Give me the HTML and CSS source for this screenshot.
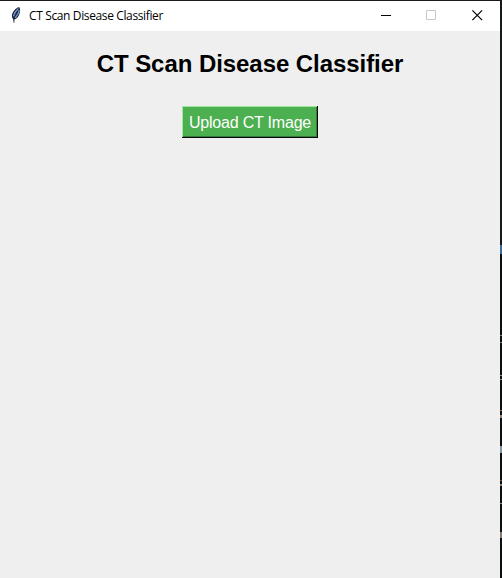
FILE: index.html
```html
<!DOCTYPE html>
<html lang="en">
<head>
<meta charset="utf-8">
<title>CT Scan Disease Classifier</title>
<link rel="stylesheet" href="styles.css">
</head>
<body>
<div class="desktop">
  <div class="window">
    <header class="titlebar">
      <svg class="feather" width="12" height="18" viewBox="0 0 12 18">
        <path d="M9.1 1C10.6 2.5 10.4 6 9 9C7.9 11.5 6 13.2 4.4 13.6L4.4 16.8L3.6 16.8L3.2 13.2C1.5 11 1.5 8.8 2.8 6.4C4.3 3.8 6.6 1.6 9.1 1Z" fill="#18253f"/>
        <path d="M8.4 2.6C6.2 4.4 4.2 7 3.4 10.4M9.2 4.2C8.8 7 7.1 9.8 5.2 11.8" fill="none" stroke="#7699c8" stroke-width="1.3"/>
      </svg>
      <span class="caption">CT Scan Disease Classifier</span>
      <div class="controls">
        <svg width="46" height="30" viewBox="0 0 46 30"><path d="M18 14.5h10" stroke="#000"/></svg>
        <svg width="45" height="30" viewBox="0 0 45 30"><path d="M17.5 9.5h9v9h-9z" fill="none" stroke="#c8c8c8"/></svg>
        <svg width="46" height="30" viewBox="0 0 46 30"><path d="M18.4 9.4l9.7 9.7M28.1 9.4l-9.7 9.7" stroke="#000" stroke-width="1.2"/></svg>
      </div>
    </header>
    <main class="content">
      <h1 class="heading">CT Scan Disease Classifier</h1>
      <button class="upload" type="button">Upload CT Image</button>
    </main>
  </div>
  <div class="edge"></div>
</div>
</body>
</html>
```

FILE: styles.css
```css
body {
  margin: 0;
  overflow: hidden;
}

.desktop {
  display: flex;
  box-sizing: border-box;
  width: 502px;
  height: 578px;
  border-top: 1px solid #1c1a1f;
  background: #17181b;
}

.window {
  display: flex;
  flex-direction: column;
  width: 500px;
  background: #efefef;
}

.titlebar {
  display: flex;
  align-items: center;
  height: 30px;
  padding-left: 10px;
  background: #fff;
}

.feather {
  margin-top: -2px;
}

.caption {
  margin-left: 7px;
  font: 12px/16px "Open Sans", sans-serif;
  letter-spacing: -0.37px;
  color: #000;
  white-space: nowrap;
}

.controls {
  display: flex;
  margin-left: auto;
}

.content {
  display: flex;
  flex-direction: column;
  align-items: center;
}

.heading {
  margin: 19px 0 0;
  font: bold 24px/28px "Liberation Sans", Arial, sans-serif;
  letter-spacing: -0.06px;
  color: #000;
  white-space: nowrap;
}

.upload {
  box-sizing: border-box;
  width: 136px;
  height: 32px;
  margin: 28px 0 0;
  padding: 1px 0 0;
  border: 0;
  background: #4caf50;
  box-shadow: inset -1px -1px #050805, inset 1px 1px #9ee8a0, inset -2px -2px #337a38;
  font: 16px/31px "Liberation Sans", Arial, sans-serif;
  letter-spacing: -0.2px;
  color: #fff;
  white-space: nowrap;
}

.edge {
  width: 2px;
  background: linear-gradient(
    #17181b 244px, #3c6c9c 244px 253px, #0c0e12 253px 334px,
    #777 334px 335px, #0c0e12 335px 341px, #777 341px 342px,
    #0c0e12 342px 374px, #888 374px 375px, #0c0e12 375px 378px,
    #888 378px 379px, #0c0e12 379px 409px, #776654 409px 410px,
    #0c0e12 410px 414px, #8a8478 414px 417px, #0c0e12 417px 445px,
    #82969e 445px 452px, #0c0e12 452px 479px, #6b4a3c 479px 480px,
    #0c0e12 480px 483px, #8a8070 483px 485px, #0c0e12 485px 502px,
    #888 502px 503px, #0c0e12 503px 531px, #807c74 531px 537px,
    #0c0e12 537px);
}
```
